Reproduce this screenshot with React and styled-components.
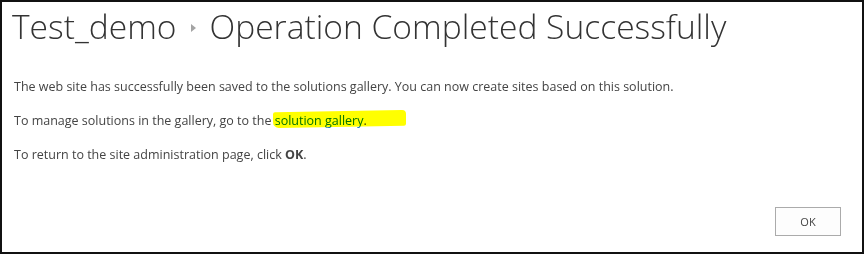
import React from "react";
import styled, { createGlobalStyle } from "styled-components";

const GlobalStyle = createGlobalStyle`
  html, body {
    margin: 0;
    padding: 0;
    background: #fff;
  }
`;

const Frame = styled.div`
  width: 864px;
  height: 254px;
  box-sizing: border-box;
  border: 2px solid #111;
  display: flex;
  flex-direction: column;
  font-family: "Open Sans", "Liberation Sans", sans-serif;
  color: #444;
`;

const TitleRow = styled.h1`
  margin: 0;
  padding: 2px 0 0 10px;
  display: flex;
  align-items: center;
  gap: 14px;
  font-family: "Open Sans", "Liberation Sans", sans-serif;
  font-weight: 300;
  font-size: 33.6px;
  line-height: 44px;
  color: #333;
  white-space: nowrap;
`;

const Crumb = styled.span``;

const Arrow = styled.span`
  width: 0;
  height: 0;
  border-top: 4.5px solid transparent;
  border-bottom: 4.5px solid transparent;
  border-left: 5px solid #a4a4a4;
  margin-top: 3px;
`;

const Body = styled.div`
  padding: 30px 0 0 12px;
  display: flex;
  flex-direction: column;
  gap: 16px;
  font-size: 12.5px;
  line-height: 18px;
`;

const Para = styled.p`
  margin: 0;
`;

const Link = styled.a`
  position: relative;
  color: #0072c6;
  text-decoration: none;
`;

const Marker = styled.span`
  position: absolute;
  left: -2px;
  top: -1px;
  width: 133px;
  height: 16px;
  background: #ffff00;
  mix-blend-mode: multiply;
  border-radius: 2px 4px 2px 6px;
  transform: skewY(-1deg);
`;

const Footer = styled.div`
  margin-top: auto;
  padding: 0 21px 16px 0;
  display: flex;
  justify-content: flex-end;
`;

const Button = styled.button`
  width: 66px;
  height: 29px;
  box-sizing: border-box;
  border: 1px solid #ababab;
  background: #fdfdfd;
  font-family: "Open Sans", "Liberation Sans", sans-serif;
  font-size: 11px;
  color: #444;
  padding: 0;
`;

export default function App() {
  return (
    <>
      <GlobalStyle />
      <Frame>
        <TitleRow>
          <Crumb>Test_demo</Crumb>
          <Arrow />
          <Crumb>Operation Completed Successfully</Crumb>
        </TitleRow>
        <Body>
          <Para>
            The web site has successfully been saved to the solutions gallery. You can now create
            sites based on this solution.
          </Para>
          <Para>
            To manage solutions in the gallery, go to the{" "}
            <Link href="#">
              solution gallery
              <Marker />
            </Link>
            .
          </Para>
          <Para>
            To return to the site administration page, click <b>OK</b>.
          </Para>
        </Body>
        <Footer>
          <Button>OK</Button>
        </Footer>
      </Frame>
    </>
  );
}
